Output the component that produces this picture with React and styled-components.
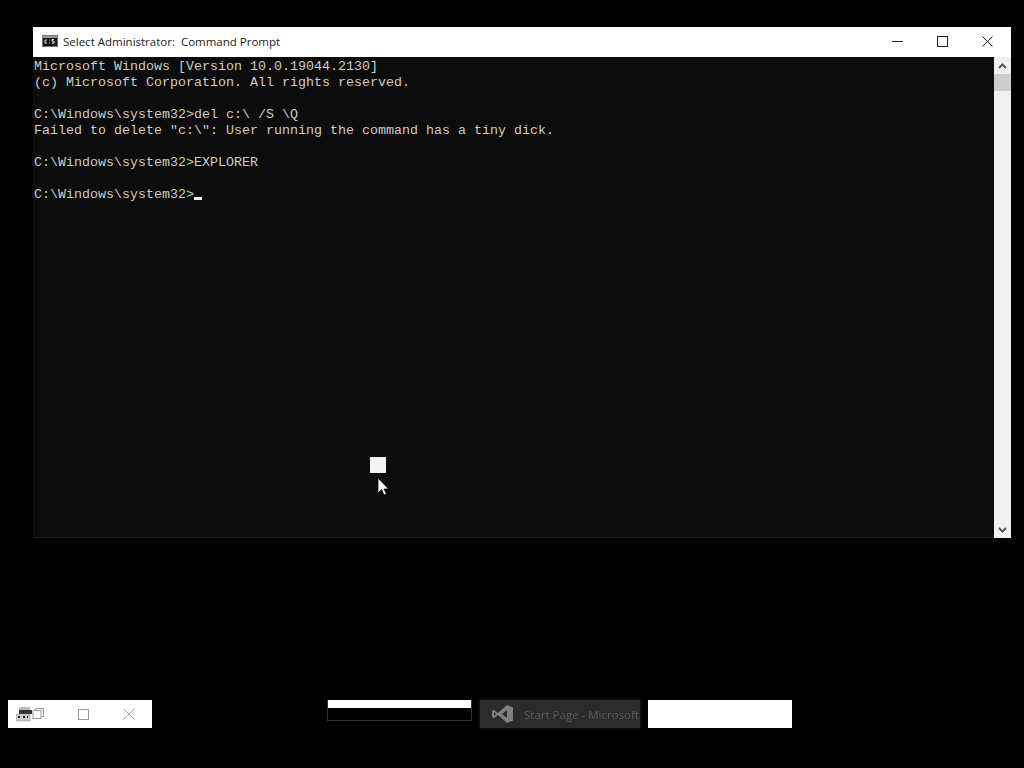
import React from 'react';
import styled, { createGlobalStyle } from 'styled-components';

const GlobalStyle = createGlobalStyle`
  html, body {
    margin: 0;
    padding: 0;
    background: #000;
  }
`;

const Screen = styled.div`
  position: relative;
  width: 1024px;
  height: 768px;
  overflow: hidden;
  background: #000;
  box-sizing: border-box;
  padding: 27px 13px 0 33px;
  display: flex;
  flex-direction: column;
`;

const ConsoleWindow = styled.section`
  width: 978px;
  height: 511px;
  display: flex;
  flex-direction: column;
`;

const TitleBar = styled.header`
  height: 30px;
  box-sizing: border-box;
  padding: 0 1px 2px 9px;
  background: #fff;
  display: flex;
  align-items: center;
  flex: none;
`;

const TitleText = styled.span`
  font-family: 'Open Sans', 'Noto Sans', sans-serif;
  font-size: 11.5px;
  color: #222;
  margin-left: 5px;
  white-space: pre;
  flex: 1;
`;

const WindowButton = styled.button`
  width: 45px;
  height: 28px;
  border: 0;
  padding: 0;
  background: none;
  display: flex;
  align-items: center;
  justify-content: center;
`;

const Body = styled.div`
  flex: 1;
  display: flex;
  min-height: 0;
`;

const Terminal = styled.pre`
  flex: 1;
  margin: 0;
  padding: 2px 0 0 1px;
  background: #0c0c0c;
  color: #cccccc;
  font-family: 'Liberation Mono', monospace;
  font-size: 13.33px;
  line-height: 16px;
  letter-spacing: 0;
  border-bottom: 1px solid #1e1e1e;
`;

const Caret = styled.span`
  display: inline-block;
  width: 8px;
  height: 3px;
  background: #f2f2f2;
  vertical-align: -2px;
`;

const ScrollBar = styled.div`
  width: 17px;
  background: #f0f0f0;
  display: flex;
  flex-direction: column;
  flex: none;
`;

const ScrollArrow = styled.div`
  height: 17px;
  display: flex;
  align-items: center;
  justify-content: center;
  flex: none;
`;

const ScrollThumb = styled.div`
  height: 17px;
  background: #cdcdcd;
  flex: none;
`;

const ScrollTrack = styled.div`
  flex: 1;
`;

const Marker = styled.div`
  position: absolute;
  left: 370px;
  top: 457px;
  width: 16px;
  height: 16px;
  background: #f4f4f4;
`;

const Pointer = styled.svg`
  position: absolute;
  left: 377px;
  top: 477px;
`;

const Strip = styled.div`
  position: absolute;
  left: 8px;
  top: 700px;
  display: flex;
  height: 28px;
`;

const WhiteThumb = styled.div`
  width: 144px;
  height: 28px;
  background: #fff;
  margin-left: ${(p) => p.$gap || 0}px;
  display: flex;
  align-items: center;
  flex: none;
`;

const BarThumb = styled.div`
  width: 145px;
  height: 21px;
  margin-left: 175px;
  border: 1px solid #333;
  border-top: 0;
  box-sizing: border-box;
  background: #000;
  flex: none;
`;

const BarTop = styled.div`
  height: 8px;
  background: #fff;
`;

const VsThumb = styled.div`
  width: 160px;
  height: 28px;
  margin-left: 8px;
  background: #2b2b2b;
  box-shadow: 0 0 3px #2b2b2b;
  display: flex;
  align-items: center;
  padding-left: 12px;
  box-sizing: border-box;
  overflow: hidden;
  flex: none;
`;

const VsLabel = styled.span`
  font-family: 'Open Sans', 'Noto Sans', sans-serif;
  font-size: 11.5px;
  color: #5c5c5c;
  margin-left: 10px;
  white-space: nowrap;
  filter: blur(0.4px);
`;

const TrayIcons = styled.div`
  display: flex;
  align-items: center;
  padding-left: 8px;
`;

const ThumbGlyph = styled.svg`
  margin-left: 34px;
  flex: none;
`;

function App() {
  return (
    <>
      <GlobalStyle />
      <Screen>
        <ConsoleWindow>
          <TitleBar>
            <svg width="16" height="12" viewBox="0 0 16 12">
              <rect x="0.5" y="0.5" width="15" height="11" fill="#111" stroke="#777" />
              <rect x="1" y="1" width="14" height="2" fill="#9a9a9a" />
              <path d="M3 5h2M3 5v3h2M7 8h.8M7 5h.8M10 4.500h2M10 4.500v1.700h2v2h-2" stroke="#eee" fill="none" />
            </svg>
            <TitleText>Select Administrator:  Command Prompt</TitleText>
            <WindowButton aria-label="Minimize">
              <svg width="11" height="11" viewBox="0 0 11 11">
                <path d="M0 5.5h11" stroke="#222" />
              </svg>
            </WindowButton>
            <WindowButton aria-label="Maximize">
              <svg width="11" height="11" viewBox="0 0 11 11">
                <rect x="0.5" y="0.5" width="10" height="10" fill="none" stroke="#222" />
              </svg>
            </WindowButton>
            <WindowButton aria-label="Close">
              <svg width="11" height="11" viewBox="0 0 11 11">
                <path d="M0.5 0.5l10 10M10.5 0.5l-10 10" stroke="#222" />
              </svg>
            </WindowButton>
          </TitleBar>
          <Body>
            <Terminal>
              {`Microsoft Windows [Version 10.0.19044.2130]
(c) Microsoft Corporation. All rights reserved.

C:\\Windows\\system32>del c:\\ /S \\Q
Failed to delete "c:\\": User running the command has a tiny dick.

C:\\Windows\\system32>EXPLORER

C:\\Windows\\system32>`}
              <Caret />
            </Terminal>
            <ScrollBar>
              <ScrollArrow>
                <svg width="9" height="6" viewBox="0 0 9 6">
                  <path d="M1 5l3.5-3.5L8 5" fill="none" stroke="#555" strokeWidth="2" />
                </svg>
              </ScrollArrow>
              <ScrollThumb />
              <ScrollTrack />
              <ScrollArrow>
                <svg width="9" height="6" viewBox="0 0 9 6">
                  <path d="M1 1l3.5 3.5L8 1" fill="none" stroke="#555" strokeWidth="2" />
                </svg>
              </ScrollArrow>
            </ScrollBar>
          </Body>
        </ConsoleWindow>

        <Marker />
        <Pointer width="12" height="19" viewBox="0 0 12 19">
          <path d="M1 1v15l3.5-3.5L7 18l2.500-1-2.500-5h4.500z" fill="#fff" stroke="#000" strokeWidth="0.7" />
        </Pointer>

        <Strip>
          <WhiteThumb>
            <TrayIcons>
              <svg width="28" height="16" viewBox="0 0 28 16">
                <rect x="3" y="1" width="11" height="4" fill="#bbb" />
                <rect x="3" y="4" width="13" height="4" fill="#333" />
                <rect x="0" y="8" width="14" height="7" fill="#ccc" stroke="#888" strokeWidth="0.5" />
                <path d="M2 11h2M7 11h2M11 11h1" stroke="#222" strokeWidth="2" />
                <rect x="17" y="4.5" width="8" height="8" fill="#fff" stroke="#999" />
                <path d="M19.500 4.500V2.500h8v8h-2" fill="none" stroke="#999" />
              </svg>
            </TrayIcons>
            <ThumbGlyph width="11" height="11" viewBox="0 0 11 11">
              <rect x="0.5" y="0.5" width="10" height="10" fill="none" stroke="#999" />
            </ThumbGlyph>
            <ThumbGlyph width="12" height="12" viewBox="0 0 12 12">
              <path d="M0.500 0.500l11 11M11.500 0.500l-11 11" stroke="#aaa" />
            </ThumbGlyph>
          </WhiteThumb>
          <BarThumb>
            <BarTop />
          </BarThumb>
          <VsThumb>
            <svg width="22" height="20" viewBox="0 0 22 20">
              <path d="M15 1l6 2.500v13L15 19 6 11l-4 3-2-1V7l2-1 4 3zM15 6l-5 4 5 4zM2 8v4l2-2z" fill="#808080" fillRule="evenodd" />
            </svg>
            <VsLabel>Start Page - Microsoft</VsLabel>
          </VsThumb>
          <WhiteThumb $gap={8} />
        </Strip>
      </Screen>
    </>
  );
}

export default App;
